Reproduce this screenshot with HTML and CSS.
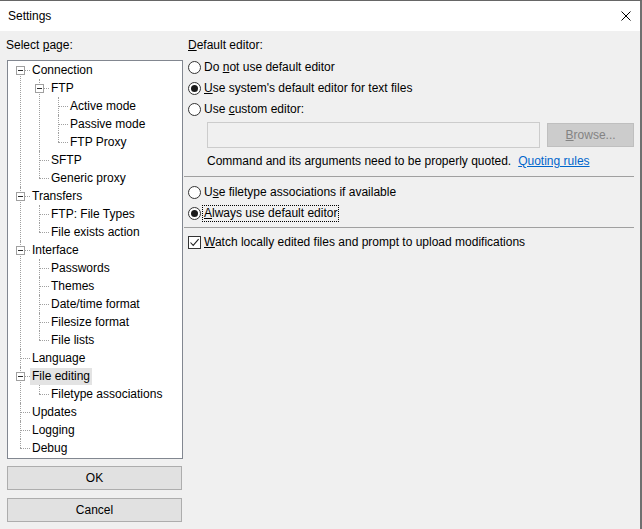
FILE: index.html
```html
<!DOCTYPE html>
<html>
<head>
<meta charset="utf-8">
<title>Settings</title>
<link rel="stylesheet" href="styles.css">
</head>
<body>
<div class="window">
  <div class="titlebar">
    <span class="title">Settings</span>
    <svg class="close" width="10" height="10" viewBox="0 0 10 10"><path d="M0.5 0.5 L9.5 9.5 M9.5 0.5 L0.5 9.5" stroke="#000" stroke-width="1" fill="none"/></svg>
  </div>
  <div class="main">
    <div class="leftcol">
      <div class="select-label">Select <u>p</u>age:</div>
      <div class="tree-box">
        <ul class="tree">
          <li class="open">
            <div class="row"><span class="exp"></span><span class="label">Connection</span></div>
            <ul>
              <li class="open">
                <div class="row"><span class="exp"></span><span class="label">FTP</span></div>
                <ul>
                  <li><div class="row"><span class="label">Active mode</span></div></li>
                  <li><div class="row"><span class="label">Passive mode</span></div></li>
                  <li><div class="row"><span class="label">FTP Proxy</span></div></li>
                </ul>
              </li>
              <li><div class="row"><span class="label">SFTP</span></div></li>
              <li><div class="row"><span class="label">Generic proxy</span></div></li>
            </ul>
          </li>
          <li class="open">
            <div class="row"><span class="exp"></span><span class="label">Transfers</span></div>
            <ul>
              <li><div class="row"><span class="label">FTP: File Types</span></div></li>
              <li><div class="row"><span class="label">File exists action</span></div></li>
            </ul>
          </li>
          <li class="open">
            <div class="row"><span class="exp"></span><span class="label">Interface</span></div>
            <ul>
              <li><div class="row"><span class="label">Passwords</span></div></li>
              <li><div class="row"><span class="label">Themes</span></div></li>
              <li><div class="row"><span class="label">Date/time format</span></div></li>
              <li><div class="row"><span class="label">Filesize format</span></div></li>
              <li><div class="row"><span class="label">File lists</span></div></li>
            </ul>
          </li>
          <li><div class="row"><span class="label">Language</span></div></li>
          <li class="open">
            <div class="row"><span class="exp"></span><span class="label selected">File editing</span></div>
            <ul>
              <li><div class="row"><span class="label">Filetype associations</span></div></li>
            </ul>
          </li>
          <li><div class="row"><span class="label">Updates</span></div></li>
          <li><div class="row"><span class="label">Logging</span></div></li>
          <li><div class="row"><span class="label">Debug</span></div></li>
        </ul>
      </div>
      <div class="btn">OK</div>
      <div class="btn btn-cancel">Cancel</div>
    </div>
    <div class="rightcol">
      <div class="heading"><u>D</u>efault editor:</div>
      <div class="group-top">
        <div class="opt"><span class="radio"></span><span class="text">Do <u>n</u>ot use default editor</span></div>
        <div class="opt"><span class="radio checked"></span><span class="text"><u>U</u>se system's default editor for text files</span></div>
        <div class="opt"><span class="radio"></span><span class="text">Use <u>c</u>ustom editor:</span></div>
      </div>
      <div class="custom-row">
        <div class="input"></div>
        <div class="browse"><span><u>B</u>rowse...</span></div>
      </div>
      <div class="note">Command and its arguments need to be properly quoted.<a class="link">Quoting rules</a></div>
      <div class="sep sep-1"></div>
      <div class="group-mid">
        <div class="opt"><span class="radio"></span><span class="text">U<u>s</u>e filetype associations if available</span></div>
        <div class="opt"><span class="radio checked"></span><span class="text focus"><u>A</u>lways use default editor</span></div>
      </div>
      <div class="sep sep-2"></div>
      <div class="opt opt-check"><span class="check"><svg width="11" height="11" viewBox="0 0 11 11"><path d="M1.5 5.5 L4.2 8.4 L9.6 2.2" stroke="#222" stroke-width="1.1" fill="none"/></svg></span><span class="text"><u>W</u>atch locally edited files and prompt to upload modifications</span></div>
    </div>
  </div>
</div>
</body>
</html>
```

FILE: styles.css
```css
html, body {
  margin: 0;
  padding: 0;
}
body {
  background: #f0f0f0;
  font-family: "Liberation Sans", Arial, sans-serif;
  font-size: 12px;
  color: #000;
}
.window {
  width: 642px;
  height: 529px;
  box-sizing: border-box;
  border-top: 1px solid #666;
  border-right: 2px solid #707070;
  background: #f0f0f0;
  overflow: hidden;
}
.titlebar {
  height: 30px;
  background: #fff;
  display: flex;
  align-items: center;
  justify-content: space-between;
  padding-left: 8px;
}
.title {
  line-height: 16px;
  margin-top: -1px;
}
.close {
  margin-right: 9px;
  margin-top: -1px;
  display: block;
}
.main {
  display: flex;
  padding-left: 7px;
}
.leftcol {
  width: 176px;
  display: flex;
  flex-direction: column;
}
.select-label {
  height: 29px;
  line-height: 29px;
  margin-left: -1px;
  white-space: nowrap;
}
.tree-box {
  height: 399px;
  box-sizing: border-box;
  border: 1px solid #828790;
  background: #fff;
  overflow: hidden;
}
.tree, .tree ul {
  list-style: none;
  margin: 0;
  padding: 0;
}
.tree ul {
  margin-left: 19px;
}
.tree li {
  position: relative;
}
.tree li::before {
  content: "";
  position: absolute;
  left: 12px;
  top: 0;
  bottom: 0;
  border-left: 1px dotted #a0a0a0;
}
.tree li:last-child::before {
  bottom: auto;
  height: 9px;
}
.tree > li:first-child::before {
  top: 9px;
}
.tree .row {
  position: relative;
  height: 18px;
  display: flex;
  align-items: center;
  padding-left: 22px;
}
.tree .row::before {
  content: "";
  position: absolute;
  left: 12px;
  top: 9px;
  width: 10px;
  border-top: 1px dotted #a0a0a0;
}
.exp {
  position: absolute;
  left: 8px;
  top: 5px;
  width: 9px;
  height: 9px;
  box-sizing: border-box;
  border: 1px solid #a0a0a0;
  background: #fff;
  z-index: 1;
}
.exp::after {
  content: "";
  position: absolute;
  left: 1px;
  top: 3px;
  width: 5px;
  height: 1px;
  background: #2b2b2b;
}
.label {
  padding: 0 2px;
  line-height: 17px;
  white-space: nowrap;
  position: relative;
  z-index: 1;
}
.label.selected {
  background: #e3e3e3;
}
.btn {
  width: 175px;
  height: 24px;
  box-sizing: border-box;
  border: 1px solid #adadad;
  background: #e1e1e1;
  display: flex;
  align-items: center;
  justify-content: center;
  margin-top: 7px;
}
.btn-cancel {
  margin-top: 8px;
}
.rightcol {
  margin-left: 5px;
  width: 446px;
  display: flex;
  flex-direction: column;
}
.heading {
  margin-top: 6px;
  line-height: 16px;
  white-space: nowrap;
}
.group-top {
  margin-top: 4px;
}
.opt {
  height: 21px;
  display: flex;
  align-items: center;
  gap: 2px;
}
.text {
  padding: 0 1px;
  line-height: 15px;
  white-space: nowrap;
}
.text.focus {
  outline: 1px dotted #000;
  outline-offset: 0;
}
.radio {
  width: 13px;
  height: 13px;
  box-sizing: border-box;
  border: 1px solid #333;
  border-radius: 50%;
  background: #fff;
  display: flex;
  align-items: center;
  justify-content: center;
  flex: none;
}
.radio.checked::after {
  content: "";
  width: 7px;
  height: 7px;
  border-radius: 50%;
  background: #1a1a1a;
}
.check {
  width: 13px;
  height: 13px;
  box-sizing: border-box;
  border: 1px solid #333;
  background: #fff;
  display: flex;
  align-items: center;
  justify-content: center;
  flex: none;
}
.check svg {
  display: block;
}
.custom-row {
  margin-top: 2px;
  margin-left: 19px;
  display: flex;
  align-items: center;
}
.input {
  width: 334px;
  height: 26px;
  box-sizing: border-box;
  border: 1px solid #cccccc;
  background: #f0f0f0;
}
.browse {
  margin-left: 7px;
  width: 87px;
  height: 24px;
  box-sizing: border-box;
  border: 1px solid #bfbfbf;
  background: #cccccc;
  color: #838383;
  display: flex;
  align-items: center;
  justify-content: center;
}
.note {
  margin-top: 5px;
  margin-left: 19px;
  line-height: 16px;
  white-space: nowrap;
}
.link {
  color: #0066cc;
  text-decoration: underline;
  margin-left: 7px;
}
.sep {
  height: 1px;
  background: #a0a0a0;
  margin-left: -4px;
}
.sep-1 {
  margin-top: 7px;
}
.group-mid {
  margin-top: 5px;
}
.sep-2 {
  margin-top: 3px;
}
.opt-check {
  margin-top: 4px;
}
```
